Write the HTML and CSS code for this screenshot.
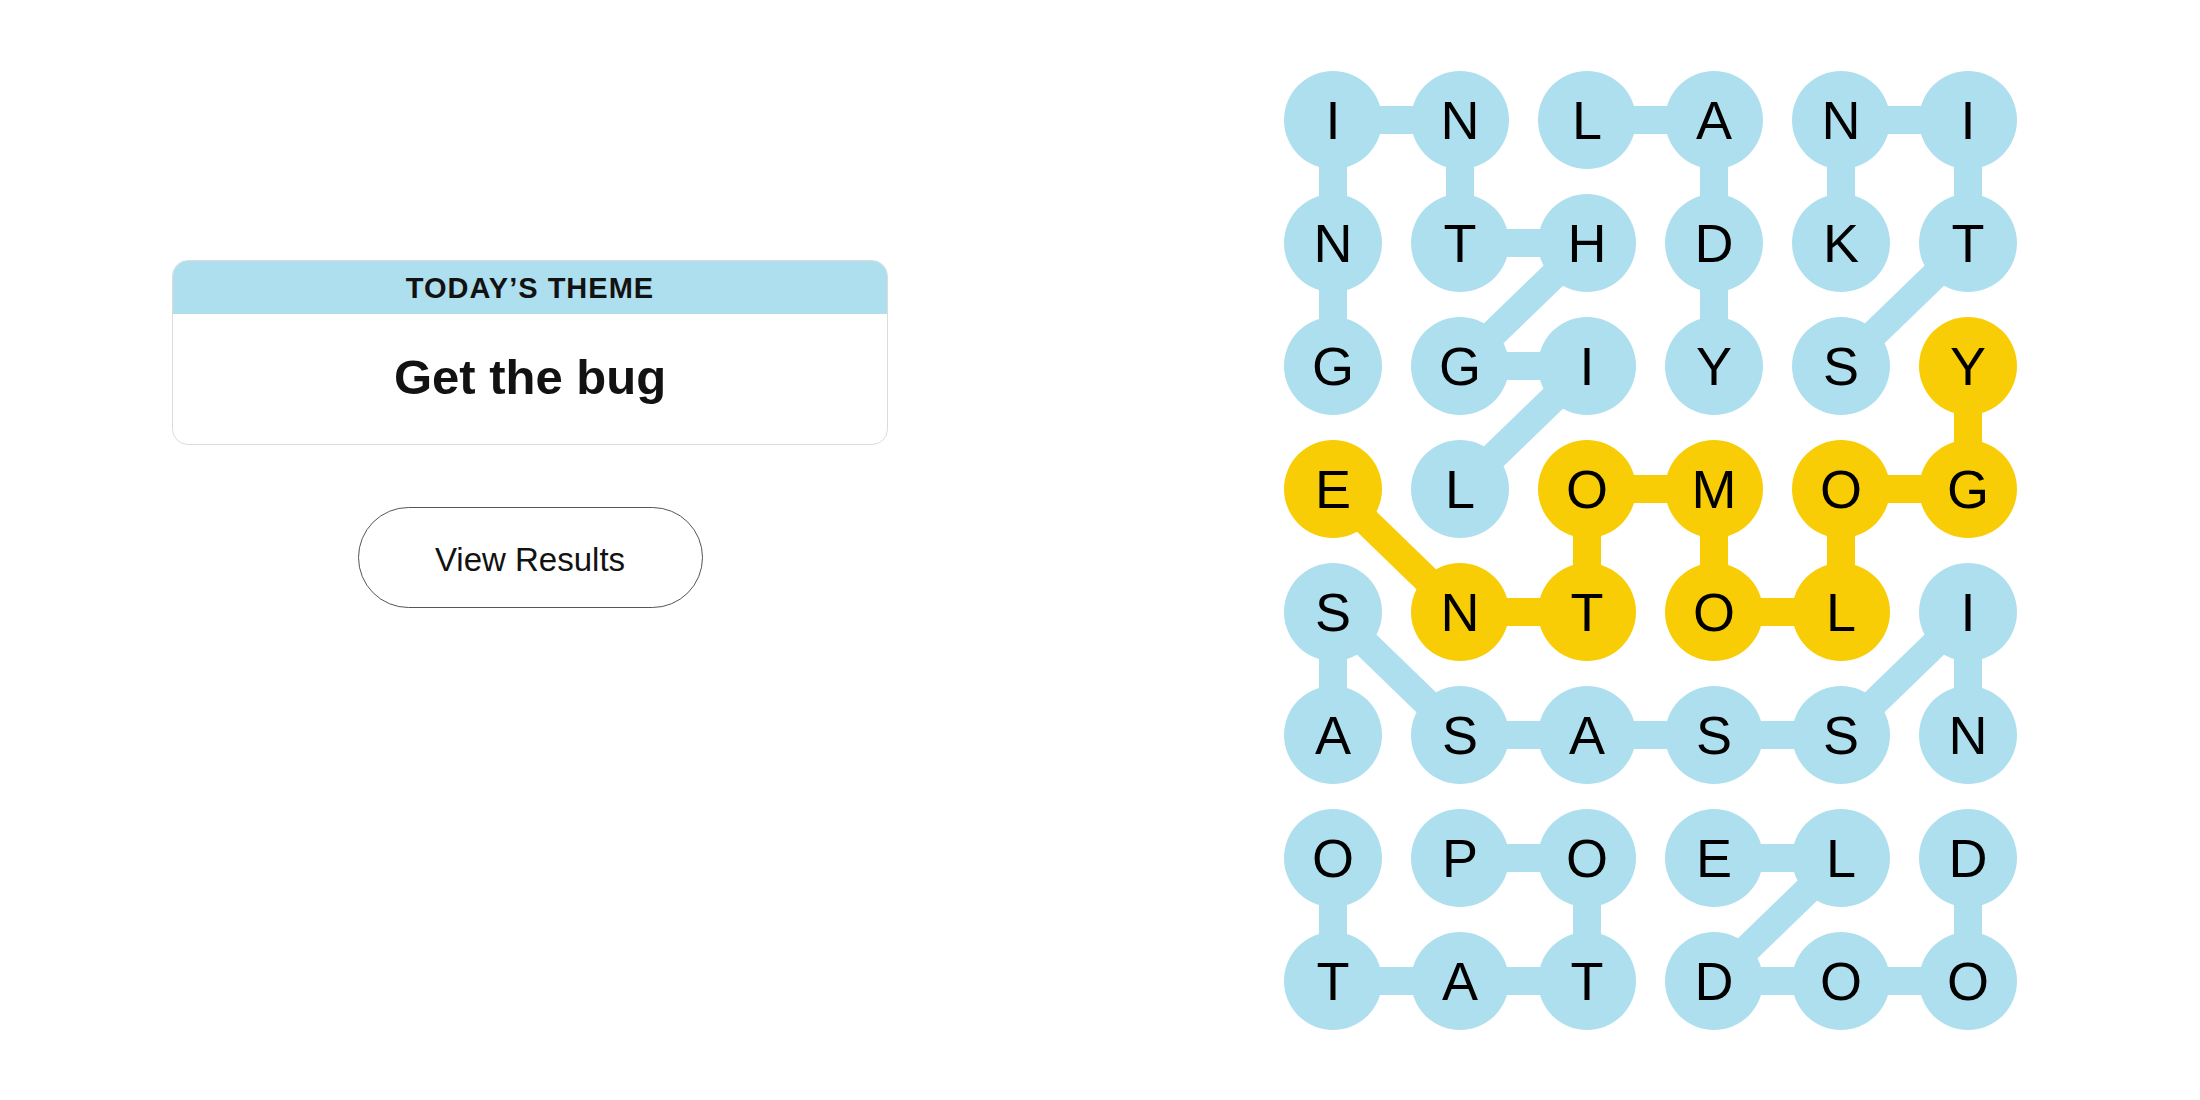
FILE: index.html
```html
<!DOCTYPE html>
<html lang="en">
  <head>
    <meta charset="UTF-8" />
    <meta name="viewport" content="width=device-width, initial-scale=1.0" />
    <title>Strands</title>
    <link rel="stylesheet" href="styles.css">
  </head>
  <body>
    <main class="game">
      <!-- Theme + results -->
      <section class="side">
        <div class="theme-card">
          <div class="theme-label">TODAY’S THEME</div>
          <div class="theme-text">Get the bug</div>
        </div>
        <button class="results-btn">View Results</button>
      </section>

      <!-- Letter board -->
      <section class="board">
        <svg class="links" width="733" height="959" viewBox="0 0 733 959">
          <g class="found">
            <polyline points="176,418 303,295 176,295 303,172 176,172 176,49 49,49 49,172 49,295" />
            <polyline points="303,49 430,49 430,172 430,295" />
            <polyline points="557,295 684,172 684,49 557,49 557,172" />
            <polyline points="49,664 49,541 176,664 303,664 430,664 557,664 684,541 684,664" />
            <polyline points="176,787 303,787 303,910 176,910 49,910 49,787" />
            <polyline points="684,787 684,910 557,910 430,910 557,787 430,787" />
          </g>
          <g class="spangram">
            <polyline points="49,418 176,541 303,541 303,418 430,418 430,541 557,541 557,418 684,418 684,295" />
          </g>
        </svg>

        <div class="cell">I</div>
        <div class="cell">N</div>
        <div class="cell">L</div>
        <div class="cell">A</div>
        <div class="cell">N</div>
        <div class="cell">I</div>

        <div class="cell">N</div>
        <div class="cell">T</div>
        <div class="cell">H</div>
        <div class="cell">D</div>
        <div class="cell">K</div>
        <div class="cell">T</div>

        <div class="cell">G</div>
        <div class="cell">G</div>
        <div class="cell">I</div>
        <div class="cell">Y</div>
        <div class="cell">S</div>
        <div class="cell span">Y</div>

        <div class="cell span">E</div>
        <div class="cell">L</div>
        <div class="cell span">O</div>
        <div class="cell span">M</div>
        <div class="cell span">O</div>
        <div class="cell span">G</div>

        <div class="cell">S</div>
        <div class="cell span">N</div>
        <div class="cell span">T</div>
        <div class="cell span">O</div>
        <div class="cell span">L</div>
        <div class="cell">I</div>

        <div class="cell">A</div>
        <div class="cell">S</div>
        <div class="cell">A</div>
        <div class="cell">S</div>
        <div class="cell">S</div>
        <div class="cell">N</div>

        <div class="cell">O</div>
        <div class="cell">P</div>
        <div class="cell">O</div>
        <div class="cell">E</div>
        <div class="cell">L</div>
        <div class="cell">D</div>

        <div class="cell">T</div>
        <div class="cell">A</div>
        <div class="cell">T</div>
        <div class="cell">D</div>
        <div class="cell">O</div>
        <div class="cell">O</div>
      </section>
    </main>
  </body>
</html>
```

FILE: styles.css
```css
/* Page */
body {
  margin: 0;
  background-color: #ffffff;
  font-family: "Liberation Sans", Arial, sans-serif;
  color: #121212;
}

.game {
  display: flex;
  justify-content: space-between;
  align-items: flex-start;
  padding: 71px 183px 0 172px;
}

/* Left column */
.side {
  width: 716px;
  margin-top: 189px;
  display: flex;
  flex-direction: column;
  align-items: center;
}

.theme-card {
  width: 100%;
  box-sizing: border-box;
  border: 1px solid #dcdcdc;
  border-radius: 16px;
  overflow: hidden; /* keep header inside the rounded corners */
}

.theme-label {
  height: 53px;
  background-color: #aedfee;
  display: flex;
  align-items: center;
  justify-content: center;
  font-size: 29px;
  font-weight: 600;
  letter-spacing: 1px;
  padding-top: 2px;
  box-sizing: border-box;
}

.theme-text {
  height: 130px;
  display: flex;
  align-items: center;
  justify-content: center;
  font-size: 49px;
  font-weight: 700;
  padding-bottom: 4px;
  box-sizing: border-box;
}

.results-btn {
  margin-top: 62px;
  width: 345px;
  height: 101px;
  background-color: #ffffff;
  border: 1.5px solid #555;
  border-radius: 51px;
  font-family: inherit;
  font-size: 33px;
  color: #121212;
  padding-top: 6px;
  cursor: pointer;
}

/* Board */
.board {
  position: relative;
  display: grid;
  grid-template-columns: repeat(6, 98px);
  grid-auto-rows: 98px;
  column-gap: 29px;
  row-gap: 25px;
}

.links {
  position: absolute;
  top: 0;
  left: 0;
}

.links polyline {
  fill: none;
  stroke-width: 28;
  stroke-linejoin: round;
}

.found polyline {
  stroke: #aedfee;
}

.spangram polyline {
  stroke: #f8cd05;
}

.cell {
  position: relative; /* sit above the link lines */
  width: 98px;
  height: 98px;
  border-radius: 50%;
  background-color: #aedfee;
  display: flex;
  align-items: center;
  justify-content: center;
  font-size: 54px;
  line-height: 1;
  color: #000;
}

.cell.span {
  background-color: #f8cd05;
}
```
